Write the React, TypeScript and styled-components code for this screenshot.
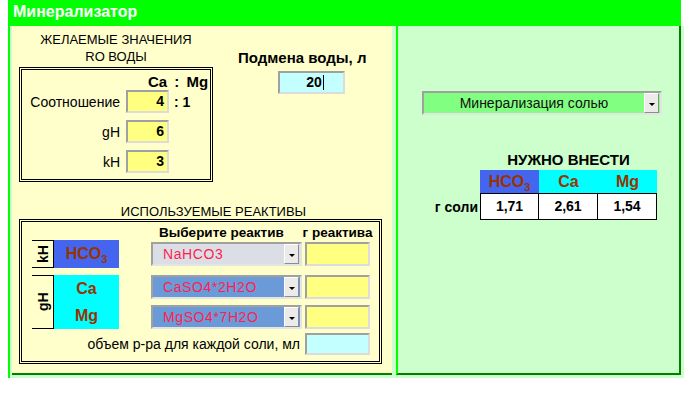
import styled, { createGlobalStyle } from 'styled-components';
import * as React from 'react';

//-----------------------------------------------------------------------------//
// Styles
//-----------------------------------------------------------------------------//

const GlobalStyle = createGlobalStyle`
  html, body {
    margin:     0;
    padding:    0;
    background: #ffffff;
  }
  body {
    font-family: "Liberation Sans", Arial, sans-serif;
    font-size:   14px;
    color:       #000000;
  }
`;

const Page = styled.div`
  padding-left: 8px;
  width:        676px;
`;

const Header = styled.div`
  width:       673px;
  height:      26px;
  box-sizing:  border-box;
  padding-left: 5px;
  background:  #00ff00;
  color:       #ffffff;
  font-weight: bold;
  font-size:   16px;
  line-height: 24px;
`;

const Body = styled.div`
  display:      flex;
  gap:          4px;
  width:        676px;
  box-sizing:   border-box;
  background:   #ccffcc;
  border-left:  2px solid #00ff00;
  padding:      0 3px 3px 2px;
`;

const LeftPanel = styled.div`
  width:         380px;
  height:        349px;
  box-sizing:    border-box;
  background:    #ffffcc;
  border-bottom: 2px solid #008000;
  padding:       5px 0 0 7px;
`;

const RightPanel = styled.div`
  width:         285px;
  height:        349px;
  box-sizing:    border-box;
  border-left:   2px solid #00ff00;
  border-right:  2px solid #008000;
  border-bottom: 2px solid #008000;
  padding:       65px 0 0 24px;
`;

const TopSection = styled.div`
  display: flex;
  gap:     25px;
`;

const DesiredCol = styled.div`
  width:          194px;
  display:        flex;
  flex-direction: column;
`;

const SectionTitle = styled.div<{ $shift?: number }>`
  font-size:    13px;
  line-height:  17px;
  text-align:   center;
  padding-left: ${p => p.$shift || 0}px;
  white-space:  nowrap;
`;

const DoubleBox = styled.div<{ $w: number, $h: number }>`
  width:      ${p => p.$w}px;
  height:     ${p => p.$h}px;
  box-sizing: border-box;
  border:     3px double #000000;
`;

const RatioBox = styled(DoubleBox)`
  margin-top:     2px;
  padding:        4px 0 0 3px;
  display:        flex;
  flex-direction: column;
  gap:            7px;
`;

const RatioHead = styled.div`
  font-weight:   bold;
  font-size:     15px;
  line-height:   16px;
  word-spacing:  3px;
  padding-left:  123px;
  margin-bottom: -7px;
`;

const FieldRow = styled.div`
  display:     flex;
  align-items: center;
  height:      23px;
`;

const FieldLabel = styled.div`
  width:         95px;
  text-align:    right;
  padding-right: 6px;
`;

const Field = styled.div<{ $w: number, $bg: string, $h?: number, $align?: string }>`
  width:        ${p => p.$w}px;
  height:       ${p => p.$h || 23}px;
  box-sizing:   border-box;
  background:   ${p => p.$bg};
  border:       2px solid;
  border-color: #a0a0a0 #dcdcdc #dcdcdc #a0a0a0;
  font-weight:  bold;
  line-height:  19px;
  text-align:   ${p => p.$align || 'right'};
  padding:      0 3px;
  flex-shrink:  0;
`;

const Suffix = styled.div`
  font-weight: bold;
  margin-left: 5px;
`;

const WaterCol = styled.div`
  margin-top:     19px;
  display:        flex;
  flex-direction: column;
`;

const BoldTitle = styled.div`
  font-weight: bold;
  font-size:   15px;
  line-height: 16px;
  white-space: nowrap;
`;

const WaterField = styled(Field)`
  margin:       5px 0 0 40px;
  padding-left: 10px;
`;

const Caret = styled.span`
  display:        inline-block;
  width:          1px;
  height:         15px;
  background:     #000000;
  vertical-align: -3px;
  margin-left:    1px;
`;

const ReagentTitle = styled(SectionTitle)`
  margin-top:  22px;
  line-height: 15px;
`;

const ReagentBox = styled(DoubleBox)`
  padding: 3px 0 0 10px;
`;

const ReagentHead = styled.div`
  display:     flex;
  height:      15px;
  font-weight: bold;
  font-size:   13.5px;
  line-height: 15px;
  white-space: nowrap;
`;

const HeadSpacer = styled.div`
  width: 119px;
`;

const HeadCell = styled.div<{ $w: number, $center?: boolean }>`
  width:           ${p => p.$w}px;
  display:         flex;
  justify-content: ${p => p.$center ? 'center' : 'flex-start'};
  padding-left:    ${p => p.$center ? 0 : 8}px;
  box-sizing:      border-box;
  margin-right:    3px;
`;

const ReagentGroup = styled.div<{ $h: number, $gap?: number }>`
  display:     flex;
  align-items: center;
  height:      ${p => p.$h}px;
  margin-top:  ${p => p.$gap || 0}px;
`;

const VertLabel = styled.div`
  width:           22px;
  height:          100%;
  box-sizing:      border-box;
  border:          1px solid #000000;
  border-right:    none;
  display:         flex;
  align-items:     center;
  justify-content: center;
  font-weight:     bold;
  writing-mode:    vertical-rl;
  transform:       rotate(180deg);
`;

const IonBox = styled.div<{ $bg: string }>`
  width:           65px;
  height:          100%;
  background:      ${p => p.$bg};
  display:         flex;
  flex-direction:  column;
  justify-content: space-around;
  align-items:     center;
  color:           #993300;
  font-weight:     bold;
  font-size:       16px;
`;

const Sub = styled.sub`
  font-size:      11px;
  vertical-align: -4px;
  line-height:    0;
`;

const SelectCol = styled.div`
  margin-left:    32px;
  display:        flex;
  flex-direction: column;
  gap:            6px;
`;

const ReagentRow = styled.div`
  display: flex;
  gap:     3px;
`;

const Select = styled.div<{ $w: number, $bg: string }>`
  width:        ${p => p.$w}px;
  height:       24px;
  box-sizing:   border-box;
  background:   ${p => p.$bg};
  border:       2px solid;
  border-color: #a0a0a0 #e4e4e4 #e4e4e4 #a0a0a0;
  display:      flex;
  align-items:  center;
  flex-shrink:  0;
`;

const SelectText = styled.div<{ $center?: boolean, $color: string }>`
  flex:           1;
  color:          ${p => p.$color};
  padding-left:   ${p => p.$center ? 0 : 10}px;
  text-align:     ${p => p.$center ? 'center' : 'left'};
  letter-spacing: ${p => p.$center ? 0 : 0.6}px;
  white-space:    nowrap;
`;

const ArrowBtn = styled.div`
  width:           15px;
  height:          20px;
  margin-right:    1px;
  box-sizing:      border-box;
  background:      #ecebea;
  border:          1px solid;
  border-color:    #ffffff #8c8c8c #8c8c8c #ffffff;
  display:         flex;
  align-items:     center;
  justify-content: center;
  &::after {
    content:      '';
    margin-top:   2px;
    border-left:  3px solid transparent;
    border-right: 3px solid transparent;
    border-top:   3px solid #000000;
  }
`;

const VolumeRow = styled.div`
  display:         flex;
  justify-content: flex-end;
  align-items:     center;
  gap:             5px;
  margin-top:      4px;
  padding-right:   9px;
  white-space:     nowrap;
`;

const ModeSelect = styled(Select)`
  margin-bottom: 37px;
`;

const ResultGrid = styled.div`
  display:               grid;
  grid-template-columns: 58px 59px 59px 59px;
`;

const ResultTitle = styled(BoldTitle)`
  grid-column:   2 / 5;
  text-align:    center;
  margin-bottom: 2px;
`;

const ResultHead = styled.div<{ $bg: string }>`
  height:      23px;
  background:  ${p => p.$bg};
  color:       #993300;
  font-weight: bold;
  font-size:   16px;
  line-height: 23px;
  text-align:  center;
`;

const RowLabel = styled.div`
  font-weight:   bold;
  text-align:    right;
  padding-right: 2px;
  align-self:    center;
`;

const ResultCell = styled.div<{ $first?: boolean }>`
  height:      27px;
  box-sizing:  border-box;
  background:  #ffffff;
  border:      1px solid #000000;
  border-left: ${p => p.$first ? '1px solid #000000' : 'none'};
  font-weight: bold;
  line-height: 25px;
  text-align:  center;
`;

//-----------------------------------------------------------------------------//
// Data
//-----------------------------------------------------------------------------//

const YELLOW = '#ffff80';
const CYAN   = '#c4ffff';
const RED    = '#ff1f4f';

const ratioRows = [
  { label: 'Соотношение', value: '4', suffix: ': 1' },
  { label: 'gH',          value: '6' },
  { label: 'kH',          value: '3' },
];

const results = ['1,71', '2,61', '1,54'];

//-----------------------------------------------------------------------------//
// Component
//-----------------------------------------------------------------------------//

const App = () => (
  <Page>
    <GlobalStyle />
    <Header>Минерализатор</Header>
    <Body>
      <LeftPanel>
        <TopSection>
          <DesiredCol>
            <SectionTitle>ЖЕЛАЕМЫЕ ЗНАЧЕНИЯ<br />RO ВОДЫ</SectionTitle>
            <RatioBox $w={194} $h={115}>
              <RatioHead>Ca : Mg</RatioHead>
              {ratioRows.map(r => (
                <FieldRow key={r.label}>
                  <FieldLabel>{r.label}</FieldLabel>
                  <Field $w={43} $bg={YELLOW}>{r.value}</Field>
                  {r.suffix && <Suffix>{r.suffix}</Suffix>}
                </FieldRow>
              ))}
            </RatioBox>
          </DesiredCol>
          <WaterCol>
            <BoldTitle>Подмена воды, л</BoldTitle>
            <WaterField $w={67} $bg={CYAN} $align="center">20<Caret /></WaterField>
          </WaterCol>
        </TopSection>

        <ReagentTitle $shift={16}>ИСПОЛЬЗУЕМЫЕ РЕАКТИВЫ</ReagentTitle>
        <ReagentBox $w={363} $h={145}>
          <ReagentHead>
            <HeadSpacer />
            <HeadCell $w={151}>Выберите реактив</HeadCell>
            <HeadCell $w={65} $center>г реактива</HeadCell>
          </ReagentHead>

          <ReagentGroup $h={28}>
            <VertLabel>kH</VertLabel>
            <IonBox $bg="#4466ee"><span>HCO<Sub>3</Sub></span></IonBox>
            <SelectCol>
              <ReagentRow>
                <Select $w={151} $bg="#dcdee6">
                  <SelectText $color={RED}>NaHCO3</SelectText>
                  <ArrowBtn />
                </Select>
                <Field $w={65} $h={24} $bg={YELLOW} />
              </ReagentRow>
            </SelectCol>
          </ReagentGroup>

          <ReagentGroup $h={54} $gap={7}>
            <VertLabel>gH</VertLabel>
            <IonBox $bg="#00ffff"><span>Ca</span><span>Mg</span></IonBox>
            <SelectCol>
              <ReagentRow>
                <Select $w={151} $bg="#6a9bd8">
                  <SelectText $color={RED}>CaSO4*2H2O</SelectText>
                  <ArrowBtn />
                </Select>
                <Field $w={65} $h={24} $bg={YELLOW} />
              </ReagentRow>
              <ReagentRow>
                <Select $w={151} $bg="#6a9bd8">
                  <SelectText $color={RED}>MgSO4*7H2O</SelectText>
                  <ArrowBtn />
                </Select>
                <Field $w={65} $h={24} $bg={YELLOW} />
              </ReagentRow>
            </SelectCol>
          </ReagentGroup>

          <VolumeRow>
            объем р-ра для каждой соли, мл
            <Field $w={65} $h={22} $bg={CYAN} />
          </VolumeRow>
        </ReagentBox>
      </LeftPanel>

      <RightPanel>
        <ModeSelect $w={240} $bg="#80ff80">
          <SelectText $center $color="#111111">Минерализация солью</SelectText>
          <ArrowBtn />
        </ModeSelect>

        <ResultGrid>
          <ResultTitle>НУЖНО ВНЕСТИ</ResultTitle>
          <div />
          <ResultHead $bg="#4466ee">HCO<Sub>3</Sub></ResultHead>
          <ResultHead $bg="#00ffff">Ca</ResultHead>
          <ResultHead $bg="#00ffff">Mg</ResultHead>
          <RowLabel>г соли</RowLabel>
          {results.map((v, i) => (
            <ResultCell key={i} $first={i === 0}>{v}</ResultCell>
          ))}
        </ResultGrid>
      </RightPanel>
    </Body>
  </Page>
);

//-----------------------------------------------------------------------------//
// Export
//-----------------------------------------------------------------------------//

export default App;

//-----------------------------------------------------------------------------//
